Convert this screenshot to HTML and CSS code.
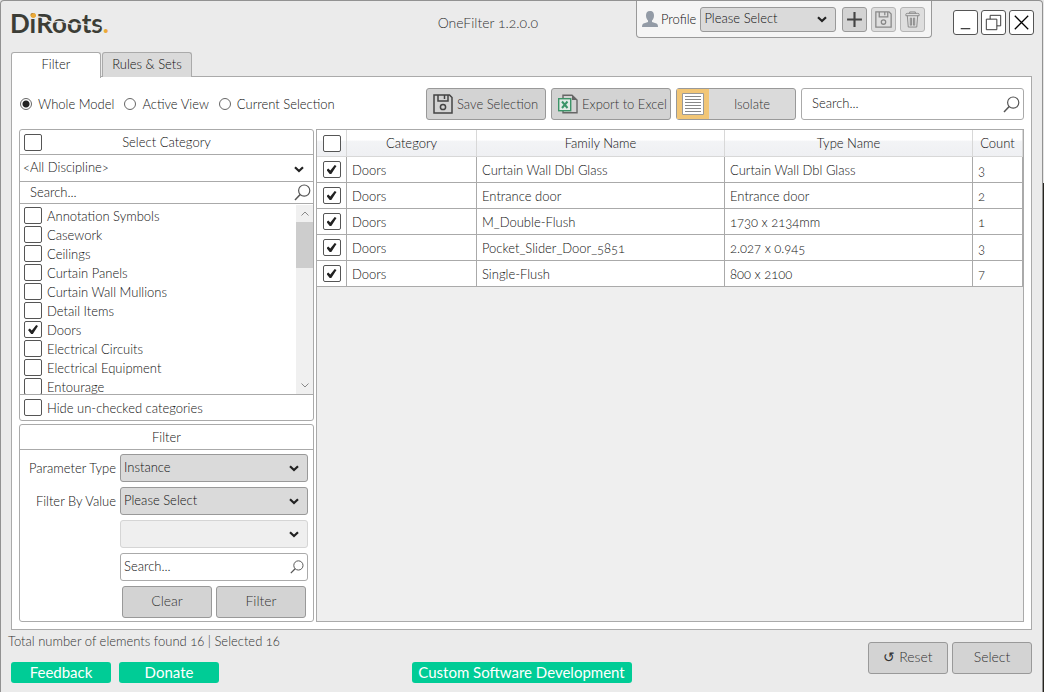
FILE: index.html
```html
<!DOCTYPE html>
<html lang="en">
<head>
    <meta charset="UTF-8">
    <meta name="viewport" content="width=device-width, initial-scale=1.0">
    <title>OneFilter 1.2.0.0</title>
    <link rel="stylesheet" href="styles.css">
</head>

<body>
    <!-- shared icons -->
    <svg class="sprite" width="0" height="0">
        <symbol id="arrow" viewBox="0 0 10 7">
            <path d="M1 1.2 L5 5 L9 1.2" fill="none" stroke="#222" stroke-width="2.2"/>
        </symbol>
        <symbol id="glass" viewBox="0 0 17 17">
            <circle cx="10.2" cy="6.6" r="5.6" fill="none" stroke="#555" stroke-width="1.2"/>
            <path d="M6.2 10.6 L1 16" stroke="#555" stroke-width="1.5"/>
        </symbol>
        <symbol id="disk" viewBox="0 0 20 20">
            <path d="M1 1 H16.5 L19 3.5 V19 H1 Z M5 1 V7 H15 V1 M11.5 1 V5" fill="none" stroke="currentColor" stroke-width="1.5"/>
            <circle cx="10" cy="13" r="2.6" fill="none" stroke="currentColor" stroke-width="1.5"/>
        </symbol>
    </svg>

    <div class="window">
        <header class="titlebar">
            <div class="logo">D<span class="logo_i">i</span>Roots<span class="logo_dot">.</span>
                <svg class="logo_cut" viewBox="0 0 94 26"><path d="M25 7 C33 3 36 12 44 11 C54 8 58 14 64 13 C72 12 80 15 90 17" fill="none" stroke="#ebebeb" stroke-width="1.3"/></svg>
            </div>
            <h1 class="title">OneFilter 1.2.0.0</h1>
            <div class="profile">
                <svg class="user" viewBox="0 0 16 16"><path d="M8 0 C5 0 4 2 4 4.500 C4 7 5 8.500 6 9.500 V11 L1.500 12.500 C.5 13 0 14 0 16 H16 C16 14 15.500 13 14.500 12.500 L10 11 V9.500 C11 8.500 12 7 12 4.500 C12 2 11 0 8 0 Z" fill="#939ba6"/></svg>
                <label for="profile">Profile</label>
                <div class="select profile_select">
                    <select id="profile"><option>Please Select</option></select>
                    <svg><use href="#arrow"/></svg>
                </div>
                <button class="icon_btn" aria-label="Add profile">
                    <svg viewBox="0 0 16 16"><path d="M8 1 V15 M1 8 H15" stroke="#444" stroke-width="2"/></svg>
                </button>
                <button class="icon_btn disabled" aria-label="Save profile"><svg><use href="#disk"/></svg></button>
                <button class="icon_btn disabled" aria-label="Delete profile">
                    <svg viewBox="0 0 16 18"><path d="M1 5 V3.500 Q1 2.500 2.500 2.500 H13.500 Q15 2.500 15 3.500 V5 Z M5 2.500 V1 H11 V2.500 M2.500 5 L3.500 17 H12.500 L13.500 5 M5.700 7.500 V15 H7 V7.500 Z M9 7.500 V15 H10.300 V7.500 Z" fill="none" stroke="currentColor"/></svg>
                </button>
            </div>
            <div class="controls">
                <button aria-label="Minimize"><svg viewBox="0 0 24 24"><path d="M7 18.500 H17" stroke="#000"/></svg></button>
                <button aria-label="Restore"><svg viewBox="0 0 24 24"><path d="M4.500 8.500 H15.500 V19.500 H4.500 Z M8.500 8.500 V4.500 H19.500 V15.500 H15.500" fill="none" stroke="#333"/></svg></button>
                <button aria-label="Close"><svg viewBox="0 0 24 24"><path d="M5 5 L19 19 M19 5 L5 19" stroke="#000" stroke-width="1.300"/></svg></button>
            </div>
        </header>

        <nav class="tabs">
            <button class="tab active">Filter</button>
            <button class="tab">Rules &amp; Sets</button>
        </nav>

        <main class="panel">
            <div class="toolbar">
                <div class="scope">
                    <label><input type="radio" name="scope" checked>Whole Model</label>
                    <label><input type="radio" name="scope">Active View</label>
                    <label><input type="radio" name="scope">Current Selection</label>
                </div>
                <button class="tool"><svg class="tool_icon"><use href="#disk"/></svg>Save Selection</button>
                <button class="tool">
                    <svg class="tool_icon" viewBox="0 0 20 20">
                        <path d="M5 4 V1.200 H14 L19 6 V18.800 H5 V16" fill="none" stroke="#666" stroke-width="1.400"/>
                        <path d="M14 1 V6 H19 Z" fill="#666"/>
                        <rect x=".7" y="4.700" width="12" height="12" fill="#e4ebe7" stroke="#3c9468" stroke-width="1.400"/>
                        <path d="M4 7.500 L9.500 14 M9.500 7.500 L4 14" stroke="#3c9468" stroke-width="2"/>
                    </svg>Export to Excel</button>
                <button class="tool isolate">
                    <span class="isolate_icon">
                        <svg viewBox="0 0 22 22"><path d="M.5 .5 H21.500 V21.500 H.5 Z" fill="#fff" stroke="#999"/><path d="M3 3.500 H19 M3 6.500 H19 M3 9.500 H19 M3 12.500 H19 M3 15.500 H19 M3 18.500 H19" stroke="#888"/></svg>
                    </span>
                    <span class="isolate_text">Isolate</span>
                </button>
                <label class="search toolbar_search">
                    <input type="text" placeholder="Search..." aria-label="Search elements">
                    <svg><use href="#glass"/></svg>
                </label>
            </div>

            <div class="content">
                <aside class="side">
                    <section class="box category">
                        <div class="box_head">
                            <input type="checkbox" aria-label="Select all categories">
                            <h2>Select Category</h2>
                        </div>
                        <div class="select discipline">
                            <select aria-label="Discipline"><option>&lt;All Discipline&gt;</option></select>
                            <svg><use href="#arrow"/></svg>
                        </div>
                        <label class="search category_search">
                            <input type="text" placeholder="Search..." aria-label="Search categories">
                            <svg><use href="#glass"/></svg>
                        </label>
                        <div class="list_wrap">
                            <div class="list">
                                <label><input type="checkbox">Annotation Symbols</label>
                                <label><input type="checkbox">Casework</label>
                                <label><input type="checkbox">Ceilings</label>
                                <label><input type="checkbox">Curtain Panels</label>
                                <label><input type="checkbox">Curtain Wall Mullions</label>
                                <label><input type="checkbox">Detail Items</label>
                                <label><input type="checkbox" checked>Doors</label>
                                <label><input type="checkbox">Electrical Circuits</label>
                                <label><input type="checkbox">Electrical Equipment</label>
                                <label><input type="checkbox">Entourage</label>
                            </div>
                            <div class="scrollbar">
                                <svg viewBox="0 0 17 17"><path d="M5.500 10.500 L9 7 L12.500 10.500" fill="none" stroke="#888"/></svg>
                                <div class="thumb"></div>
                                <svg class="down" viewBox="0 0 17 17"><path d="M5.500 6.500 L9 10 L12.500 6.500" fill="none" stroke="#888"/></svg>
                            </div>
                        </div>
                        <label class="hide_row"><input type="checkbox">Hide un-checked categories</label>
                    </section>

                    <section class="box filter">
                        <div class="box_head"><h2>Filter</h2></div>
                        <div class="filter_form">
                            <label for="ptype">Parameter Type</label>
                            <div class="select">
                                <select id="ptype"><option>Instance</option></select>
                                <svg><use href="#arrow"/></svg>
                            </div>
                            <label for="pvalue">Filter By Value</label>
                            <div class="select">
                                <select id="pvalue"><option>Please Select</option></select>
                                <svg><use href="#arrow"/></svg>
                            </div>
                            <div class="select empty">
                                <select aria-label="Value" disabled><option></option></select>
                                <svg><use href="#arrow"/></svg>
                            </div>
                            <label class="search filter_search">
                                <input type="text" placeholder="Search..." aria-label="Search values">
                                <svg><use href="#glass"/></svg>
                            </label>
                            <div class="filter_btns">
                                <button class="btn">Clear</button>
                                <button class="btn">Filter</button>
                            </div>
                        </div>
                    </section>
                </aside>

                <div class="grid">
                    <table>
                        <colgroup><col class="c_check"><col class="c_cat"><col><col><col class="c_count"></colgroup>
                        <thead>
                            <tr>
                                <th><input type="checkbox" aria-label="Select all"></th>
                                <th>Category</th>
                                <th>Family Name</th>
                                <th>Type Name</th>
                                <th>Count</th>
                            </tr>
                        </thead>
                        <tbody>
                            <tr><td><input type="checkbox" aria-label="Select row" checked></td><td>Doors</td><td>Curtain Wall Dbl Glass</td><td>Curtain Wall Dbl Glass</td><td>3</td></tr>
                            <tr><td><input type="checkbox" aria-label="Select row" checked></td><td>Doors</td><td>Entrance door</td><td>Entrance door</td><td>2</td></tr>
                            <tr><td><input type="checkbox" aria-label="Select row" checked></td><td>Doors</td><td>M_Double-Flush</td><td>1730 x 2134mm</td><td>1</td></tr>
                            <tr><td><input type="checkbox" aria-label="Select row" checked></td><td>Doors</td><td>Pocket_Slider_Door_5851</td><td>2.027 x 0.945</td><td>3</td></tr>
                            <tr><td><input type="checkbox" aria-label="Select row" checked></td><td>Doors</td><td>Single-Flush</td><td>800 x 2100</td><td>7</td></tr>
                        </tbody>
                    </table>
                </div>
            </div>
        </main>

        <footer class="footer">
            <div class="status">Total number of elements found 16 | Selected 16</div>
            <div class="links">
                <a class="link" href="#">Feedback</a>
                <a class="link" href="#">Donate</a>
            </div>
            <a class="link custom" href="#">Custom Software Development</a>
            <div class="actions">
                <button class="btn">↺ Reset</button>
                <button class="btn">Select</button>
            </div>
        </footer>
    </div>
</body>
</html>
```
FILE: styles.css
```css
*{
    box-sizing: border-box;
}
html{
    background: linear-gradient(#e6e6e6 183px, #26241f 183px);
}
body{
    margin: 0;
    font-family: Lato, "Noto Sans", sans-serif;
    font-size: 13px;
    font-weight: 300;
    font-variant-numeric: oldstyle-nums;
    line-height: 16px;
    color: #111;
}
button, input, select{
    margin: 0;
    font: inherit;
    color: inherit;
}
button{
    padding: 0;
}
h1, h2{
    margin: 0;
    font-size: 13px;
    font-weight: 300;
}
.sprite{
    position: absolute;
}
.window{
    display: flex;
    flex-direction: column;
    height: 100vh;
    min-height: 600px;
    margin-right: 1px;
    background-color: #ebebeb;
    border: 1px solid #929292;
    border-bottom: 0;
    border-radius: 4px 4px 0 0;
}

/* title bar */
.titlebar{
    display: flex;
    height: 50px;
    padding: 0 8px 0 9px;
}
.logo{
    position: relative;
    width: 95px;
    padding-top: 7px;
    font-size: 26px;
    line-height: 30px;
    font-weight: 700;
    color: #3c3d36;
    white-space: nowrap;
}
.logo_i{
    position: relative;
}
.logo_i::after{
    content: "";
    position: absolute;
    left: 1px;
    top: 6px;
    width: 5px;
    height: 5px;
    border-radius: 50%;
    background-color: #eba937;
}
.logo_dot{
    color: #eba937;
}
.logo_cut{
    position: absolute;
    left: 0;
    top: 10px;
    width: 94px;
    height: 26px;
}
.title{
    flex: 1;
    padding: 14px 98px 0 0;
    font-size: 14px;
    text-align: right;
    color: #333;
}
.profile{
    display: flex;
    align-items: center;
    width: 296px;
    height: 37px;
    padding: 0 6px 0 5px;
    background-color: #f5f5f5;
    border: 1px solid #999;
    border-top: 0;
    border-radius: 0 0 4px 4px;
}
.user{
    width: 16px;
    height: 16px;
    margin-right: 3px;
}
.profile_select{
    flex: 1;
    margin-left: 4px;
}
.icon_btn{
    display: flex;
    align-items: center;
    justify-content: center;
    width: 25px;
    height: 25px;
    margin-left: 4px;
    background-color: #d3d3d3;
    border: 1px solid #999;
    border-radius: 3px;
}
.profile_select + .icon_btn{
    margin-left: 6px;
}
.icon_btn svg{
    width: 17px;
    height: 17px;
}
.icon_btn.disabled{
    color: #888;
    background-color: #dedede;
    border-color: #b5b5b5;
}
.controls{
    display: flex;
    gap: 3px;
    margin-left: 21px;
    padding-top: 9px;
}
.controls button{
    width: 25px;
    height: 25px;
    background-color: #fff;
    border: 1px solid #555;
    border-radius: 3px;
}
.controls svg{
    display: block;
    width: 23px;
    height: 23px;
}

/* form controls */
input[type=checkbox]{
    appearance: none;
    position: relative;
    flex: none;
    width: 18px;
    height: 17px;
    background-color: #fff;
    border: 1px solid #555;
    border-radius: 2px;
}
input[type=checkbox]:checked::after{
    content: "";
    position: absolute;
    left: 3px;
    top: 3px;
    width: 10px;
    height: 9px;
    background-color: #222;
    clip-path: polygon(0 55%, 18% 40%, 38% 62%, 82% 0, 100% 12%, 48% 100%, 32% 100%);
}
input[type=radio]{
    appearance: none;
    width: 12px;
    height: 12px;
    background-color: #fff;
    border: 1px solid #666;
    border-radius: 50%;
}
input[type=radio]:checked{
    background: radial-gradient(#222 3px, #fff 4px);
}
input::placeholder{
    color: #111;
    opacity: 1;
}
.select{
    position: relative;
}
.select select{
    appearance: none;
    display: block;
    width: 100%;
    height: 28px;
    padding: 0 24px 2px 3px;
    background-color: #dadada;
    border: 1px solid #999;
    border-radius: 3px;
    opacity: 1;
}
.profile_select select{
    height: 25px;
}
.select svg{
    position: absolute;
    right: 9px;
    top: 50%;
    width: 10px;
    height: 7px;
    margin-top: -3px;
    pointer-events: none;
}
.select.empty select{
    background-color: #efefef;
    border-color: #d5d5d5;
}
.search{
    display: flex;
    align-items: center;
    padding-right: 3px;
    background-color: #fff;
    border: 1px solid #aaa;
    border-radius: 3px;
}
.search input{
    flex: 1;
    min-width: 0;
    padding: 0 0 2px;
    background: none;
    border: 0;
    outline: 0;
}
.search svg{
    width: 17px;
    height: 17px;
}
.btn{
    height: 32px;
    padding-bottom: 2px;
    font-size: 14px;
    color: #333;
    background-color: #d3d3d3;
    border: 1px solid #999;
    border-radius: 3px;
}

/* tabs */
.tabs{
    display: flex;
    align-items: flex-end;
    gap: 1px;
    height: 26px;
    margin: 0 10px;
}
.tab{
    position: relative;
    width: 90px;
    height: 25px;
    padding-bottom: 2px;
    background-color: #dadada;
    border: 1px solid #aaa;
    border-bottom: 0;
    border-radius: 3px 3px 0 0;
}
.tab.active{
    z-index: 1;
    height: 26px;
    margin-bottom: -1px;
    padding-bottom: 4px;
    background-color: #fff;
}
.panel{
    display: flex;
    flex: 1;
    flex-direction: column;
    min-height: 0;
    margin: -1px 10px 0;
    padding: 11px 7px 7px;
    background-color: #fff;
    border: 1px solid #aaa;
}

/* toolbar */
.toolbar{
    display: flex;
    gap: 5px;
    height: 32px;
    margin-bottom: 9px;
}
.scope{
    display: flex;
    flex: 1;
    align-items: center;
    gap: 10px;
    padding-left: 1px;
    white-space: nowrap;
}
.scope label{
    display: flex;
    align-items: center;
    gap: 6px;
}
.tool{
    display: flex;
    align-items: center;
    width: 120px;
    padding-left: 6px;
    color: #333;
    background-color: #d3d3d3;
    border: 1px solid #999;
    border-radius: 3px;
    white-space: nowrap;
}
.tool_icon{
    width: 20px;
    height: 20px;
    margin-right: 4px;
    color: #444;
}
.tool.isolate{
    padding: 0;
    background-color: #dadada;
}
.isolate_icon{
    display: flex;
    align-items: center;
    justify-content: center;
    width: 32px;
    height: 30px;
    background-color: #f2c676;
}
.isolate_icon svg{
    width: 22px;
    height: 22px;
}
.isolate_text{
    flex: 1;
}
.toolbar_search{
    width: 223px;
    padding-left: 10px;
}

/* left side */
.content{
    display: flex;
    flex: 1;
    gap: 2px;
    min-height: 0;
}
.side{
    display: flex;
    flex-direction: column;
    gap: 3px;
    width: 295px;
}
.box{
    border: 1px solid #aaa;
    border-radius: 3px;
}
.category{
    display: flex;
    flex: 1;
    flex-direction: column;
    min-height: 0;
}
.box_head{
    display: flex;
    align-items: center;
    height: 25px;
    padding: 0 4px;
    border-bottom: 1px solid #aaa;
}
.box_head h2{
    flex: 1;
    text-align: center;
}
.box_head input + h2{
    margin-left: -18px;
}
.discipline select{
    height: 27px;
    background-color: #fff;
    border-width: 0 0 1px;
    border-color: #aaa;
    border-radius: 0;
}
.category_search{
    height: 22px;
    padding: 0 2px 0 10px;
    border-width: 0 0 1px;
    border-radius: 0;
}
.list_wrap{
    display: flex;
    flex: 1;
    min-height: 0;
    padding-top: 1px;
}
.list{
    flex: 1;
    padding: 1px 0 0 4px;
    overflow: hidden;
}
.list label{
    display: flex;
    align-items: center;
    gap: 5px;
    height: 19px;
}
.scrollbar{
    display: flex;
    flex-direction: column;
    width: 17px;
    background-color: #f0f0f0;
}
.scrollbar svg{
    width: 17px;
    height: 17px;
}
.thumb{
    height: 46px;
    background-color: #cdcdcd;
}
.scrollbar .down{
    margin-top: auto;
}
.hide_row{
    display: flex;
    align-items: center;
    gap: 5px;
    height: 26px;
    padding-left: 4px;
    border-top: 1px solid #aaa;
}
.filter_form{
    display: grid;
    grid-template-columns: 96px 1fr;
    gap: 5px 4px;
    align-items: center;
    padding: 4px 5px 3px 0;
}
.filter_form > label:not(.search){
    text-align: right;
}
.empty, .filter_search, .filter_btns{
    grid-column: 2;
}
.filter_search{
    height: 28px;
    padding-left: 3px;
}
.filter_search svg{
    width: 14px;
    height: 14px;
}
.filter_btns{
    display: flex;
    gap: 4px;
    padding: 0 2px;
}
.filter_btns .btn{
    flex: 1;
}

/* results table */
.grid{
    flex: 1;
    background-color: #efefef;
    border: 1px solid #aaa;
}
table{
    width: 100%;
    table-layout: fixed;
    border-spacing: 0;
    background-color: #fff;
}
.c_check{
    width: 30px;
}
.c_cat{
    width: 130px;
}
.c_count{
    width: 50px;
}
th, td{
    height: 26px;
    padding: 0 5px;
    border-right: 1px solid #aaa;
    border-bottom: 1px solid #aaa;
    text-align: left;
}
th{
    height: 27px;
    padding: 0;
    font-weight: 300;
    text-align: center;
    background: linear-gradient(#fff 40%, #f3f4f6 41%, #eff0f3);
    border-color: #d8d8d8;
}
th:first-child, td:first-child{
    padding: 0;
}
.grid input[type=checkbox]{
    display: block;
    margin: 0 auto;
}

/* footer */
.footer{
    display: grid;
    grid-template-columns: 1fr auto 1fr;
    grid-template-rows: 24px 21px;
    row-gap: 8px;
    padding: 0 10px 9px;
}
.status{
    grid-column: 1 / 3;
    margin-left: -3px;
    padding-top: 3px;
    color: #333;
}
.links{
    display: flex;
    grid-row: 2;
    gap: 8px;
}
.link{
    width: 100px;
    font-size: 15px;
    font-weight: 400;
    line-height: 21px;
    text-align: center;
    text-decoration: none;
    color: #fff;
    background-color: #00cc96;
    border-radius: 3px;
}
.custom{
    grid-row: 2;
    width: 220px;
}
.actions{
    display: flex;
    grid-column: 3;
    grid-row: 1 / 3;
    justify-content: flex-end;
    gap: 4px;
    padding-top: 12px;
}
.actions .btn{
    width: 80px;
}
```
